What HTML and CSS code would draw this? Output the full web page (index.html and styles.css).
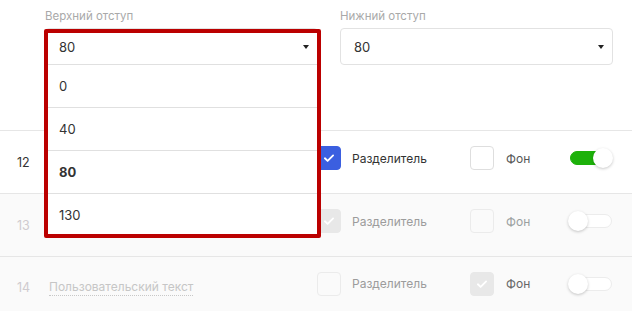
FILE: index.html
```html
<!DOCTYPE html>
<html lang="ru">
<head>
<meta charset="utf-8">
<link rel="stylesheet" href="styles.css">
</head>
<body>
<div class="page">
  <div class="fields">
    <div class="field">
      <div class="label">Верхний отступ</div>
      <div class="select"><span>80</span><span class="caret"></span></div>
      <div class="menu">
        <div class="menu-head"><span>80</span><span class="caret"></span></div>
        <div class="option">0</div>
        <div class="option">40</div>
        <div class="option selected">80</div>
        <div class="option">130</div>
      </div>
    </div>
    <div class="field">
      <div class="label">Нижний отступ</div>
      <div class="select"><span>80</span><span class="caret"></span></div>
    </div>
  </div>

  <div class="row">
    <div class="num">12</div>
    <div class="text"></div>
    <div class="cb checked"><svg viewBox="0 0 24 24"><path d="M7.5 12.3l3 2.9 6-6" /></svg></div>
    <div class="cb-label">Разделитель</div>
    <div class="cb"></div>
    <div class="cb-label fon">Фон</div>
    <div class="toggle on"><span class="track"></span><span class="knob"></span></div>
  </div>

  <div class="row muted">
    <div class="num">13</div>
    <div class="text"></div>
    <div class="cb checked disabled"><svg viewBox="0 0 24 24"><path d="M7.5 12.3l3 2.9 6-6" /></svg></div>
    <div class="cb-label">Разделитель</div>
    <div class="cb"></div>
    <div class="cb-label fon">Фон</div>
    <div class="toggle"><span class="track"></span><span class="knob"></span></div>
  </div>

  <div class="row muted r14">
    <div class="num">14</div>
    <div class="text"><span class="custom">Пользовательский текст</span></div>
    <div class="cb"></div>
    <div class="cb-label">Разделитель</div>
    <div class="cb checked disabled"><svg viewBox="0 0 24 24"><path d="M7.5 12.3l3 2.9 6-6" /></svg></div>
    <div class="cb-label fon">Фон</div>
    <div class="toggle"><span class="track"></span><span class="knob"></span></div>
  </div>
</div>
</body>
</html>
```

FILE: styles.css
```css
* { box-sizing: border-box; }
html, body { margin: 0; padding: 0; background: #fff; }
body {
  font-family: Inter, "Noto Sans", sans-serif;
  font-size: 12px;
  color: #333;
  width: 632px;
  height: 311px;
  overflow: hidden;
}
.page { position: relative; }

.fields {
  display: flex;
  gap: 22px;
  padding: 8px 19px 0 45px;
  height: 130px;
}
.field { position: relative; width: 273px; }
.label {
  font-size: 11.5px;
  line-height: 16px;
  color: #a9a9a9;
  margin-bottom: 4px;
}
.select {
  height: 37px;
  border: 1px solid #e2e2e2;
  border-radius: 4px;
  display: flex;
  align-items: center;
  justify-content: space-between;
  padding: 0 8px 0 13px;
  color: #333;
  font-size: 13px;
}
.caret {
  width: 0; height: 0;
  border-left: 3px solid transparent;
  border-right: 3px solid transparent;
  border-top: 4px solid #222;
}

.menu {
  position: absolute;
  left: -1px;
  top: 21px;
  width: 277px;
  height: 209px;
  border: 4px solid #bb0000;
  border-radius: 2px;
  background: #fff;
  overflow: hidden;
  z-index: 5;
  font-size: 13px;
}
.menu-head {
  height: 32px;
  display: flex;
  align-items: center;
  justify-content: space-between;
  padding: 0 8px 3px 11px;
  border-bottom: 1px solid #e0e0e0;
}
.option {
  height: 43px;
  line-height: 42px;
  padding-left: 11px;
  border-bottom: 1px solid #e0e0e0;
  color: #333;
}
.option.selected { font-weight: 700; }

.row {
  display: grid;
  grid-template-columns: 32px 268px 24px 129px 24px 74px 45px;
  align-items: center;
  height: 63px;
  padding: 0 19px 0 17px;
  border-top: 1px solid #e6e6e6;
  background: #fff;
}
.row.muted { background: #fafafa; }
.r14 { height: 60px; }
.num { color: #333; padding-top: 1px; font-size: 12.5px; }
.muted .num { color: #cfcbcf; }
.custom {
  color: #c6c6c6;
  border-bottom: 1px dotted #c8c8c8;
  padding-bottom: 1px;
}
.cb, .cb-label, .toggle { margin-top: -8px; }
.r14 .cb, .r14 .cb-label, .r14 .toggle { margin-top: -6px; }
.cb {
  width: 24px; height: 24px;
  border: 1px solid #dedede;
  border-radius: 4px;
  background: #fff;
  display: flex;
}
.muted .cb { border-color: #ebebeb; background: #fafafa; }
.cb svg { width: 100%; height: 100%; }
.cb path { fill: none; stroke: #fff; stroke-width: 2; stroke-linecap: round; stroke-linejoin: round; }
.cb.checked { background: #3b5fe0; border-color: #3b5fe0; }
.muted .cb.checked { background: #e8e8e8; border-color: #e8e8e8; }
.cb-label { padding-left: 11px; color: #333; }
.cb-label.fon { padding-left: 12px; color: #555; }
.muted .cb-label { color: #9c9c9c; }
.muted .cb-label.fon { color: #9aa0a0; }
.r14 .cb-label.fon { color: #666; }

.toggle { position: relative; height: 20px; }
.track {
  position: absolute;
  left: 2px; top: 3px;
  width: 42px; height: 14px;
  border-radius: 7px;
  border: 1px solid #ececec;
  background: #fff;
}
.toggle.on .track { background: #1db10a; border-color: #1db10a; }
.knob {
  position: absolute;
  left: 0; top: 0;
  width: 20px; height: 20px;
  border-radius: 50%;
  background: #fff;
  box-shadow: 0 1px 3px rgba(0,0,0,0.22);
}
.toggle.on .knob { left: 25px; }
```
